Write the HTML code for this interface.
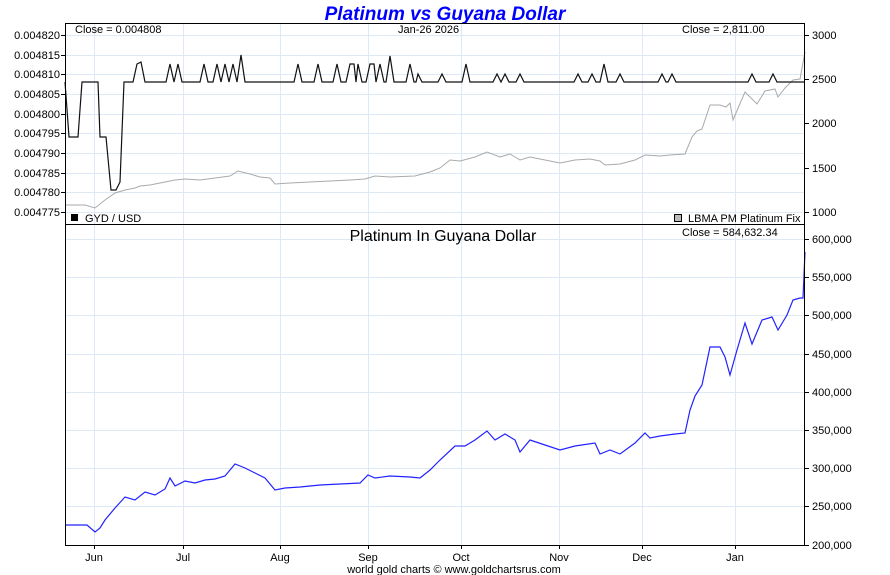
<!DOCTYPE html>
<html><head><meta charset="utf-8"><style>
html,body{margin:0;padding:0;background:#fff;}
svg{display:block;font-family:"Liberation Sans",sans-serif;}
</style></head><body>
<svg width="890" height="575" viewBox="0 0 890 575" xmlns="http://www.w3.org/2000/svg">
<rect width="890" height="575" fill="#fff"/>
<text x="445" y="20" text-anchor="middle" font-size="19" font-weight="bold" font-style="italic" fill="#0000ff">Platinum vs Guyana Dollar</text>
<g stroke="#dde9f5" stroke-width="1">
<line x1="94.5" y1="24" x2="94.5" y2="545"/><line x1="183.5" y1="24" x2="183.5" y2="545"/>
<line x1="280.5" y1="24" x2="280.5" y2="545"/><line x1="368.5" y1="24" x2="368.5" y2="545"/>
<line x1="461.5" y1="24" x2="461.5" y2="545"/><line x1="559.5" y1="24" x2="559.5" y2="545"/>
<line x1="642.5" y1="24" x2="642.5" y2="545"/><line x1="735.5" y1="24" x2="735.5" y2="545"/>
<line x1="65" y1="35.5" x2="805" y2="35.5"/><line x1="65" y1="55.5" x2="805" y2="55.5"/>
<line x1="65" y1="74.5" x2="805" y2="74.5"/><line x1="65" y1="94.5" x2="805" y2="94.5"/>
<line x1="65" y1="114.5" x2="805" y2="114.5"/><line x1="65" y1="133.5" x2="805" y2="133.5"/>
<line x1="65" y1="153.5" x2="805" y2="153.5"/><line x1="65" y1="173.5" x2="805" y2="173.5"/>
<line x1="65" y1="192.5" x2="805" y2="192.5"/><line x1="65" y1="212.5" x2="805" y2="212.5"/>
<line x1="65" y1="239.5" x2="805" y2="239.5"/><line x1="65" y1="277.5" x2="805" y2="277.5"/>
<line x1="65" y1="315.5" x2="805" y2="315.5"/><line x1="65" y1="354.5" x2="805" y2="354.5"/>
<line x1="65" y1="392.5" x2="805" y2="392.5"/><line x1="65" y1="430.5" x2="805" y2="430.5"/>
<line x1="65" y1="468.5" x2="805" y2="468.5"/><line x1="65" y1="506.5" x2="805" y2="506.5"/>
</g>
<polyline fill="none" stroke="#aaa" stroke-width="1" points="65,205 85,205 95,208 105,200 115,193 125,190 135,188 140,186 150,185 160,183 170,181 175,180 185,179 200,180 215,178 230,176 238,171 250,174 260,177 270,178 275,184 290,183 310,182 330,181 350,180 365,179 375,176 390,177 415,176 430,172 440,168 450,160 460,161 475,157 487,152 500,157 510,154 520,160 530,157 545,160 560,163 575,160 590,159 600,161 605,165 620,164 635,160 645,155 660,156 670,155 685,154 692,137 697,131 702,129 710,105 720,105 726,107 730,103 733,120 745,92 757,104 765,91 775,89 778,97 785,88 793,80 800,79 805,52"/>
<polyline fill="none" stroke="#111" stroke-width="1.2" points="65,82 69,137 78,137 82,82 98,82 100,137 106,137 111,190 116,190 120,182 124,82 133,82 137,64 141,62 145,82 166,82 170,64 174,82 178,64 182,82 200,82 204,64 208,82 213,82 217,64 221,82 225,64 229,82 233,64 237,82 241,55 245,82 294,82 298,64 302,82 314,82 318,64 322,82 333,82 337,64 341,82 346,82 350,64 354,64 356,82 358,64 362,82 366,82 370,64 374,64 376,82 380,64 384,82 386,82 390,56 394,82 406,82 410,64 414,82 416,82 418,74 422,82 438,82 442,74 446,82 462,82 466,64 470,82 493,82 497,74 501,82 505,74 509,82 516,82 520,74 524,82 574,82 578,74 582,82 588,82 592,74 596,82 600,82 604,64 608,82 616,82 620,74 624,82 658,82 662,74 666,82 668,82 672,74 676,82 748,82 752,74 756,82 769,82 773,74 777,82 805,82"/>
<polyline fill="none" stroke="#2222ff" stroke-width="1.2" points="65,525 87,525 95,532 100,528 105,520 115,508 125,497 135,500 145,492 155,495 165,489 170,478 175,486 185,481 195,483 205,480 215,479 225,476 235,464 245,468 255,473 265,478 275,490 285,488 300,487 320,485 340,484 360,483 368,475 375,478 390,476 410,477 420,478 430,470 440,460 455,446 465,446 475,440 487,431 495,440 505,434 515,440 520,452 530,440 545,445 560,450 575,446 595,443 600,454 610,450 620,454 635,443 645,433 650,438 660,436 675,434 685,433 690,410 695,396 702,385 710,347 720,347 725,357 730,375 737,350 745,323 752,344 762,320 772,317 778,330 787,315 793,300 800,298 803,298 805,252"/>
<rect x="65.5" y="23.5" width="739" height="522" fill="none" stroke="#000" stroke-width="1"/>
<line x1="65" y1="224.5" x2="805" y2="224.5" stroke="#000"/>
<g font-size="11" fill="#000">
<text x="75" y="33">Close = 0.004808</text>
<text x="398" y="33">Jan-26  2026</text>
<text x="682" y="33">Close = 2,811.00</text>
<text x="682" y="236">Close = 584,632.34</text>
<text x="85" y="222">GYD / USD</text>
<text x="688" y="222">LBMA PM Platinum Fix</text>
</g>
<rect x="71" y="214" width="7" height="7" fill="#000"/>
<rect x="674.5" y="214.5" width="7" height="7" fill="#bbb" stroke="#000"/>
<text x="443" y="241" text-anchor="middle" font-size="16" fill="#000">Platinum In Guyana Dollar</text>
<g font-size="11" fill="#000" text-anchor="end">
<text x="60" y="39">0.004820</text><text x="60" y="59">0.004815</text><text x="60" y="78">0.004810</text>
<text x="60" y="98">0.004805</text><text x="60" y="118">0.004800</text><text x="60" y="137">0.004795</text>
<text x="60" y="157">0.004790</text><text x="60" y="177">0.004785</text><text x="60" y="196">0.004780</text>
<text x="60" y="216">0.004775</text>
</g>
<g stroke="#000"><line x1="61" y1="35.5" x2="65" y2="35.5"/><line x1="61" y1="55.5" x2="65" y2="55.5"/><line x1="61" y1="74.5" x2="65" y2="74.5"/><line x1="61" y1="94.5" x2="65" y2="94.5"/><line x1="61" y1="114.5" x2="65" y2="114.5"/><line x1="61" y1="133.5" x2="65" y2="133.5"/><line x1="61" y1="153.5" x2="65" y2="153.5"/><line x1="61" y1="173.5" x2="65" y2="173.5"/><line x1="61" y1="192.5" x2="65" y2="192.5"/><line x1="61" y1="212.5" x2="65" y2="212.5"/>
<line x1="805" y1="35.5" x2="809" y2="35.5"/><line x1="805" y1="79.5" x2="809" y2="79.5"/><line x1="805" y1="123.5" x2="809" y2="123.5"/><line x1="805" y1="168.5" x2="809" y2="168.5"/><line x1="805" y1="212.5" x2="809" y2="212.5"/>
<line x1="805" y1="239.5" x2="809" y2="239.5"/><line x1="805" y1="277.5" x2="809" y2="277.5"/><line x1="805" y1="315.5" x2="809" y2="315.5"/><line x1="805" y1="354.5" x2="809" y2="354.5"/><line x1="805" y1="392.5" x2="809" y2="392.5"/><line x1="805" y1="430.5" x2="809" y2="430.5"/><line x1="805" y1="468.5" x2="809" y2="468.5"/><line x1="805" y1="506.5" x2="809" y2="506.5"/><line x1="805" y1="545.5" x2="809" y2="545.5"/>
<line x1="94.5" y1="545" x2="94.5" y2="549"/><line x1="183.5" y1="545" x2="183.5" y2="549"/><line x1="280.5" y1="545" x2="280.5" y2="549"/><line x1="368.5" y1="545" x2="368.5" y2="549"/><line x1="461.5" y1="545" x2="461.5" y2="549"/><line x1="559.5" y1="545" x2="559.5" y2="549"/><line x1="642.5" y1="545" x2="642.5" y2="549"/><line x1="735.5" y1="545" x2="735.5" y2="549"/>
</g>
<g font-size="11" fill="#000">
<text x="812" y="39">3000</text><text x="812" y="83">2500</text><text x="812" y="127">2000</text><text x="812" y="172">1500</text><text x="812" y="216">1000</text>
<text x="812" y="243">600,000</text><text x="812" y="281">550,000</text><text x="812" y="319">500,000</text><text x="812" y="358">450,000</text><text x="812" y="396">400,000</text><text x="812" y="434">350,000</text><text x="812" y="472">300,000</text><text x="812" y="510">250,000</text><text x="812" y="549">200,000</text>
</g>
<g font-size="11" fill="#000" text-anchor="middle">
<text x="94" y="561">Jun</text><text x="183" y="561">Jul</text><text x="280" y="561">Aug</text><text x="368" y="561">Sep</text><text x="461" y="561">Oct</text><text x="559" y="561">Nov</text><text x="642" y="561">Dec</text><text x="735" y="561">Jan</text>
</g>
<text x="454" y="573" text-anchor="middle" font-size="11" fill="#000">world gold charts © www.goldchartsrus.com</text>
</svg>
</body></html>
